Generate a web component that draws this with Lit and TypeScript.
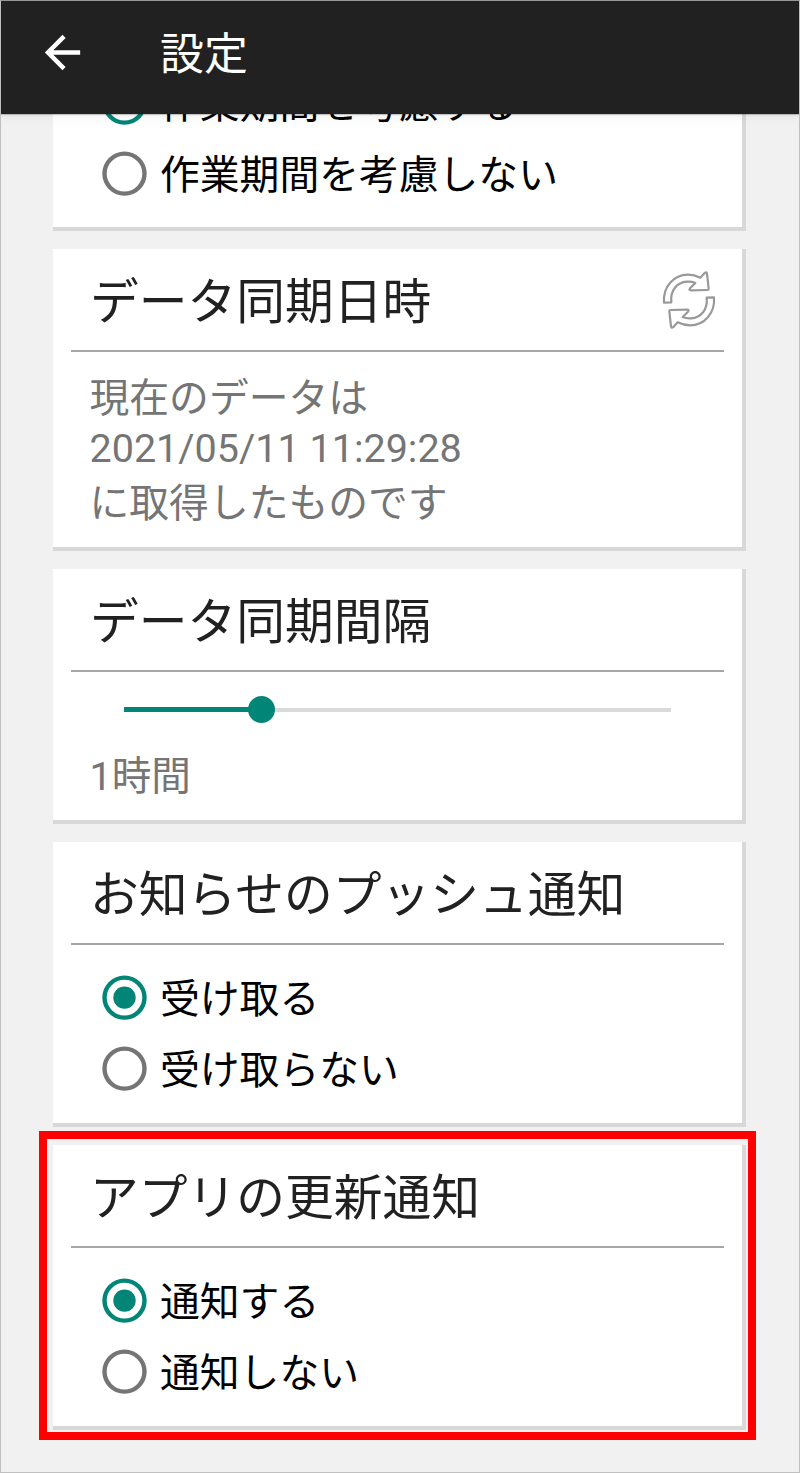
import { LitElement, html, css, svg } from "lit";
import { customElement, property } from "lit/decorators.js";

@customElement("radio-option")
class RadioOption extends LitElement {
  @property({ type: Boolean }) checked = false;
  @property() label = "";

  static styles = css`
    :host { display: flex; align-items: center; height: 71px; color: #000; }
    svg { width: 46px; height: 46px; flex: none; margin-right: 13px; }
    .label { font-size: 39.8px; line-height: 67px; padding-top: 4px; white-space: nowrap; }
    .ring { fill: none; stroke: #757575; stroke-width: 4.4; }
    .on .ring { stroke: #008577; }
    .dot { fill: #008577; }
  `;

  render() {
    return html`
      <svg class=${this.checked ? "on" : ""} viewBox="0 0 46 46">
        <circle class="ring" cx="23.5" cy="22.6" r="20"></circle>
        ${this.checked ? svg`<circle class="dot" cx="23.5" cy="22.6" r="11.2"></circle>` : ""}
      </svg>
      <span class="label">${this.label}</span>
    `;
  }
}

@customElement("setting-card")
class SettingCard extends LitElement {
  @property() heading = "";

  static styles = css`
    :host {
      display: block;
      box-sizing: border-box;
      background: #fff;
      border-right: 4px solid #d8d8d8;
      border-bottom: 4px solid #d8d8d8;
    }
    .head {
      display: flex;
      align-items: flex-start;
      justify-content: space-between;
      box-sizing: border-box;
      height: 103px;
      margin: 0 18px 0 18px;
      padding: 6px 0 0 19px;
      border-bottom: 2px solid #a6a6a6;
    }
    .title {
      margin: 0;
      font-size: 48.75px;
      font-weight: 400;
      line-height: 96px;
      color: #212121;
      white-space: nowrap;
    }
  `;

  render() {
    return html`
      ${this.heading
        ? html`<div class="head"><h2 class="title">${this.heading}</h2><slot name="action"></slot></div>`
        : ""}
      <slot></slot>
    `;
  }
}

@customElement("app-root")
class AppRoot extends LitElement {
  static styles = css`
    :host {
      display: block;
      position: relative;
      box-sizing: border-box;
      width: 800px;
      height: 1473px;
      overflow: hidden;
      background: #f1f1f1;
      font-family: Roboto, "Noto Sans CJK JP", sans-serif;
    }
    :host::after {
      content: "";
      position: absolute;
      z-index: 2;
      inset: 0;
      border: 1px solid #c0c0c0;
      border-top-color: #969696;
      pointer-events: none;
    }
    .bar {
      position: relative;
      z-index: 1;
      display: flex;
      box-sizing: border-box;
      height: 114px;
      padding-left: 36px;
      background: #212121;
      color: #fff;
      box-shadow: 0 1px 1px rgba(0, 0, 0, 0.2), 0 3px 10px rgba(0, 0, 0, 0.06);
    }
    .back { width: 53px; height: 53px; margin: 25.5px 71px 0 0; fill: #fff; }
    .bar h1 { margin: 0; font-size: 43.9px; font-weight: 400; line-height: 110px; }
    .list { display: flex; flex-direction: column; gap: 18px; margin: -48px 53px 0; }
    setting-card { width: 693px; }
    .period { height: 165px; }
    .sync { height: 302px; }
    .interval { height: 255px; }
    .push, .update { height: 285px; }
    .update { position: relative; }
    .update::after {
      content: "";
      position: absolute;
      inset: -14px -14px -14px -14px;
      border: 8px solid #f00;
      pointer-events: none;
    }
    .options { padding: 17px 0 0 48px; }
    .period .options { padding-top: 1px; }
    .refresh { width: 60px; height: 64px; margin: 13px 5px 0 0; }
    .refresh path { fill: #fff; stroke: #999; stroke-width: 6.6; stroke-linejoin: round; }
    .note { margin: 0; padding: 22px 37px 0 36.5px; font-size: 39.8px; line-height: 50px; color: #757575; }
    .note span { display: block; }
    .note .time { font-size: 39.5px; }
    .note .last { padding-top: 5px; }
    .slider { display: flex; align-items: center; height: 27px; margin: 24px 71px 0 71px; }
    .fill { height: 4.5px; background: #008577; }
    .thumb { width: 27px; height: 27px; margin: 0 -13.5px; border-radius: 50%; background: #008577; z-index: 1; }
    .rest { flex: 1; height: 4px; background: #d9d9d9; }
    .value { padding: 29px 37px 0 36.5px; font-size: 39.6px; line-height: 50px; color: #757575; }
  `;

  render() {
    const sliderValue = 25.1;
    return html`
      <header class="bar">
        <svg class="back" viewBox="0 0 24 24">
          <path d="M20 11H7.83l5.59-5.59L12 4l-8 8 8 8 1.41-1.41L7.83 13H20v-2z"></path>
        </svg>
        <h1>設定</h1>
      </header>
      <main class="list">
        <setting-card class="period">
          <div class="options">
            <radio-option checked label="作業期間を考慮する"></radio-option>
            <radio-option label="作業期間を考慮しない"></radio-option>
          </div>
        </setting-card>
        <setting-card class="sync" heading="データ同期日時">
          <svg slot="action" class="refresh" viewBox="178 533 180 192">
            <path d="M193 637C189 590 222 553 265 553Q284 553 302 562L315 548Q321 543 322 550L327 595Q327 599 323 599L274 600Q266 600 271 594L287 578Q276 573 262 574C232 576 211 600 215 636Z"></path>
            <path d="M343 621C347 668 314 705 271 705Q252 705 234 696L221 710Q215 715 214 708L209 663Q209 659 213 659L262 658Q270 658 265 664L249 680Q260 685 274 684C304 682 325 658 321 622Z"></path>
          </svg>
          <p class="note">
            <span>現在のデータは</span>
            <span class="time">2021/05/11 11:29:28</span>
            <span class="last">に取得したものです</span>
          </p>
        </setting-card>
        <setting-card class="interval" heading="データ同期間隔">
          <div class="slider">
            <div class="fill" style="width:${sliderValue}%"></div>
            <div class="thumb"></div>
            <div class="rest"></div>
          </div>
          <div class="value">1時間</div>
        </setting-card>
        <setting-card class="push" heading="お知らせのプッシュ通知">
          <div class="options">
            <radio-option checked label="受け取る"></radio-option>
            <radio-option label="受け取らない"></radio-option>
          </div>
        </setting-card>
        <setting-card class="update" heading="アプリの更新通知">
          <div class="options">
            <radio-option checked label="通知する"></radio-option>
            <radio-option label="通知しない"></radio-option>
          </div>
        </setting-card>
      </main>
    `;
  }
}
